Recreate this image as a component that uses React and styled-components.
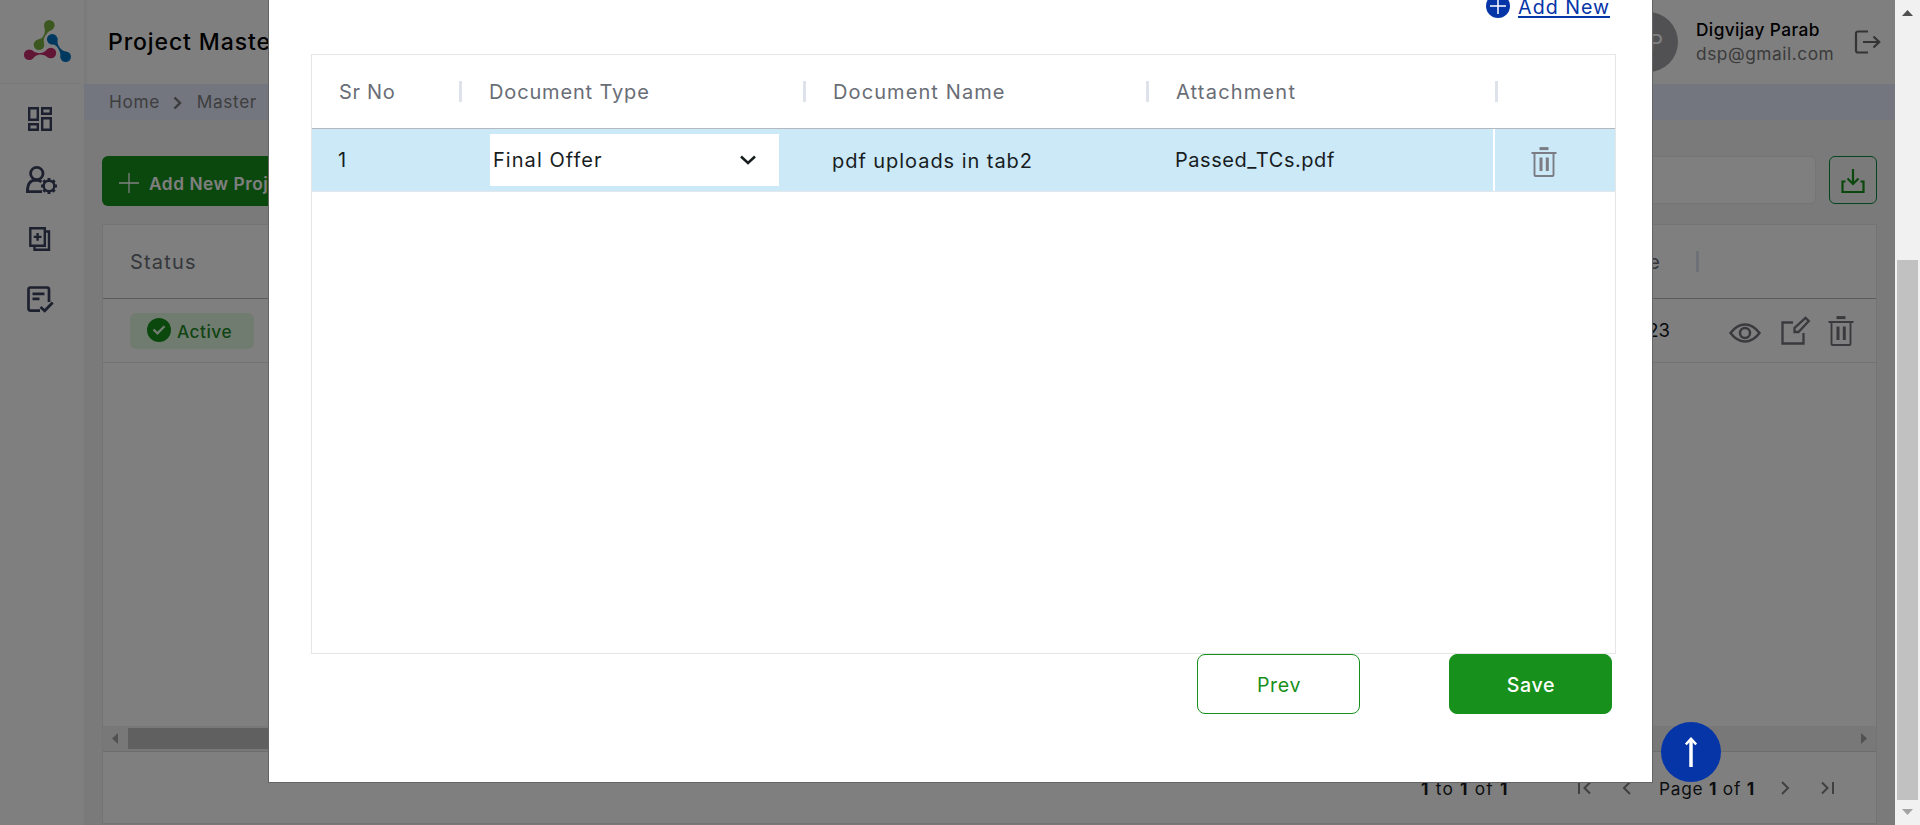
import React from 'react';
import styled, { createGlobalStyle } from 'styled-components';

const GlobalStyle = createGlobalStyle`
  * { box-sizing: border-box; }
  body { margin: 0; overflow: hidden; font-family: Inter, "Noto Sans", sans-serif; }
  svg { display: block; flex: none; }
`;

const Screen = styled.div`
  display: flex;
  width: 1920px;
  height: 825px;
  overflow: hidden;
`;

const Viewport = styled.div`
  position: relative;
  display: flex;
  width: 1895px;
  height: 825px;
  overflow: hidden;
  background: #f4f4f4;
`;

const Sidebar = styled.aside`
  width: 84px;
  flex: none;
  background: #fff;
`;

const LogoArea = styled.div`
  width: 80px;
  height: 84px;
  padding: 18px 0 0 23px;
  border-bottom: 1px solid #eee;
`;

const Nav = styled.nav`
  display: flex;
  flex-direction: column;
  gap: 28px;
  padding: 19px 0 0 24px;
`;

const Main = styled.div`
  flex: 1;
  min-width: 0;
`;

const Header = styled.header`
  display: flex;
  justify-content: space-between;
  align-items: center;
  height: 84px;
  padding: 0 14px 0 24px;
  background: linear-gradient(to right, #f4f4f4, #fff 6px);
`;

const Title = styled.div`
  padding-bottom: 1px;
  font-size: 23px;
  font-weight: 450;
  letter-spacing: 0.9px;
  color: #000;
`;

const Account = styled.div`
  display: flex;
  align-items: center;
`;

const Avatar = styled.div`
  display: flex;
  align-items: center;
  justify-content: center;
  width: 60px;
  height: 60px;
  border-radius: 50%;
  background: #a3a3a6;
  color: #fff;
  font-size: 22px;
  letter-spacing: 1px;
`;

const Identity = styled.div`
  width: 158px;
  margin-left: 18px;
  line-height: 24px;
  font-size: 17.3px;
  white-space: nowrap;
`;

const UserName = styled.div`
  font-weight: 450;
  letter-spacing: 0.4px;
  color: #000;
`;

const Email = styled.div`
  letter-spacing: 0.55px;
  color: #777;
`;

const Breadcrumb = styled.div`
  display: flex;
  align-items: center;
  height: 36px;
  padding: 0 0 1px 25px;
  background: #e6ebff;
  color: #7d7d7d;
  font-size: 17.3px;
  letter-spacing: 0.6px;
`;

const CrumbArrow = styled.svg`
  margin: 3px 15px 0 13px;
`;

const Toolbar = styled.div`
  display: flex;
  justify-content: space-between;
  height: 104px;
  padding: 36px 18px 0 18px;
`;

const AddProject = styled.button`
  display: flex;
  align-items: center;
  gap: 10px;
  width: 220px;
  height: 50px;
  padding: 4px 0 0 17px;
  border: 0;
  border-radius: 6px;
  background: #17911c;
  color: #fff;
  font: 600 17.3px Inter, sans-serif;
  letter-spacing: 0.55px;
  white-space: nowrap;
`;

const ToolbarRight = styled.div`
  display: flex;
  gap: 13px;
`;

const SearchBox = styled.div`
  width: 320px;
  height: 48px;
  border: 1px solid #eaeaea;
  border-radius: 6px;
  background: #fff;
`;

const ExportButton = styled.div`
  display: flex;
  align-items: center;
  justify-content: center;
  width: 48px;
  height: 48px;
  padding-top: 1px;
  border: 1px solid #0b8a3c;
  border-radius: 6px;
`;

const ProjectGrid = styled.section`
  width: 1775px;
  height: 600px;
  margin-left: 18px;
  border: 1px solid #e9e9e9;
  background: #fff;
`;

const GridHeader = styled.div`
  display: flex;
  justify-content: space-between;
  align-items: center;
  height: 74px;
  padding: 0 177px 0 27px;
  border-bottom: 1px solid #b7b9be;
  color: #6b6f78;
  font-size: 20px;
  font-weight: 370;
`;

const StatusHeading = styled.span`
  letter-spacing: 1.2px;
`;

const DateHeading = styled.span`
  display: flex;
  align-items: center;
  gap: 35px;
  letter-spacing: 1px;
`;

const GridRow = styled.div`
  display: flex;
  justify-content: space-between;
  align-items: center;
  height: 64px;
  padding: 0 22px 0 27px;
  border-bottom: 1px solid #e4e4e4;
`;

const StatusChip = styled.div`
  display: flex;
  align-items: center;
  gap: 6px;
  width: 124px;
  height: 36px;
  padding: 0 0 1px 17px;
  border-radius: 6px;
  background: #e3f8e3;
  color: #238a28;
  font-size: 17.3px;
  font-weight: 500;
  letter-spacing: 0.5px;
`;

const ChipLabel = styled.span`
  padding-top: 2px;
`;

const RowActions = styled.div`
  display: flex;
  align-items: center;
  padding-top: 1px;
  color: #74757c;
`;

const DateValue = styled.span`
  margin-right: 59px;
  padding-bottom: 2px;
  color: #0d0f14;
  font-size: 18.5px;
`;

const ActionIcon = styled.svg`
  margin-right: ${(p) => p.$after || 0}px;
`;

const GridSpace = styled.div`
  height: 363px;
`;

const HorizontalScroll = styled.div`
  display: flex;
  align-items: center;
  justify-content: space-between;
  height: 26px;
  padding: 0 9px 1px;
  border-bottom: 1px solid #dadada;
  background: #f0f0f0;
`;

const HorizontalTrack = styled.div`
  display: flex;
  flex: 1;
  padding: 0 10px;
`;

const HorizontalThumb = styled.div`
  width: 1180px;
  height: 21px;
  background: #c1c1c1;
`;

const Pagination = styled.div`
  display: flex;
  align-items: center;
  justify-content: flex-end;
  height: 71px;
  padding: 1px 42px 0 0;
  color: #181d1f;
  font-size: 17.3px;
  white-space: nowrap;

  svg { color: #808080; }
`;

const RangeText = styled.span`
  width: 157px;
  letter-spacing: 1.2px;
`;

const PageText = styled.span`
  width: 97px;
  margin: 0 25px 0 28px;
  letter-spacing: 0.75px;
`;

const PageGap = styled.span`
  width: 31px;
`;

const Backdrop = styled.div`
  position: absolute;
  inset: 0;
  background: rgba(0, 0, 0, 0.5);
`;

const Modal = styled.div`
  position: absolute;
  top: 0;
  left: 268px;
  width: 1385px;
  height: 783px;
  padding: 0 36px 0 42px;
  border: 1px solid #646464;
  border-top: 0;
  background: #fff;
`;

const ModalTools = styled.div`
  display: flex;
  justify-content: flex-end;
  gap: 8px;
  height: 54px;
  padding-right: 6px;
`;

const AddIcon = styled.svg`
  margin-top: -6px;
`;

const AddNew = styled.a`
  height: 18px;
  border-bottom: 2px solid #0635a8;
  color: #0635a8;
  font-size: 19.6px;
  font-weight: 370;
  line-height: 14px;
  letter-spacing: 1px;
`;

const DocTable = styled.div`
  width: 1305px;
  height: 600px;
  border: 1px solid #e6e6e8;
`;

const DocHeader = styled.div`
  display: grid;
  grid-template-columns: 150px 344px 343px 349px 117px;
  height: 74px;
  border-bottom: 1px solid #b4b8bf;
  color: #696d76;
`;

const DocRow = styled(DocHeader)`
  height: 63px;
  border-bottom: 1px solid #e2e9ec;
  background: #cce9f7;
  color: #181d1f;
`;

const HeadCell = styled.div`
  display: flex;
  align-items: center;
  justify-content: space-between;
  padding-left: 27px;
  font-size: 20px;
  font-weight: 370;
  letter-spacing: ${(p) => p.$track}px;
`;

const HeadDividerCell = styled.div`
  display: flex;
  align-items: center;
  margin-left: -3px;
`;

const Cell = styled.div`
  display: flex;
  align-items: center;
  padding: ${(p) => p.$drop || 0}px 0 0 26px;
  font-size: 20px;
  font-weight: 370;
  letter-spacing: ${(p) => p.$track || 0}px;
`;

const AttachmentCell = styled(Cell)`
  width: 346px;
  border-right: 2px solid #fff;
`;

const DeleteCell = styled.div`
  display: flex;
  align-items: center;
  justify-content: center;
  padding: 3px 25px 0 0;
  color: #7b7c84;
`;

const Divider = styled.i`
  width: 3px;
  height: 21px;
  background: #dde2eb;
`;

const Select = styled.div`
  display: flex;
  align-items: center;
  justify-content: space-between;
  width: 289px;
  height: 52px;
  margin-left: 2px;
  padding: 0 23px 0 3px;
  background: #fff;
`;

const Footer = styled.div`
  display: flex;
  justify-content: flex-end;
  gap: 89px;
  padding-right: 4px;
`;

const FormButton = styled.button`
  width: 163px;
  height: 60px;
  padding: 2px 0 0 1px;
  border: 1px solid #17911c;
  border-radius: 8px;
  background: ${(p) => (p.$solid ? '#17911c' : '#fff')};
  color: ${(p) => (p.$solid ? '#fff' : '#17911c')};
  font: ${(p) => (p.$solid ? 500 : 400)} 19.6px Inter, sans-serif;
  letter-spacing: 0.6px;
`;

const ToTop = styled.div`
  position: absolute;
  left: 1661px;
  top: 722px;
  display: flex;
  align-items: center;
  justify-content: center;
  width: 60px;
  height: 60px;
  border-radius: 50%;
  background: #0635a8;
`;

const PageScroll = styled.div`
  display: flex;
  flex-direction: column;
  align-items: center;
  width: 25px;
  height: 825px;
  padding: 10px 0 10px;
  background: #f1f1f1;
`;

const PageThumb = styled.div`
  width: 21px;
  height: 540px;
  margin: 244px 0 9px;
  background: #c1c1c1;
`;

const Logo = () => (
  <svg width="50" height="46" viewBox="23 18 50 46">
    <g fill="#78b040">
      <circle cx="49.3" cy="25.2" r="5.3" />
      <circle cx="39" cy="44.7" r="5.3" />
      <path d="M44.4 27Q46 33 42 38Q39 39.500 36 40.300L43.600 47Q43.500 41 44 38.500Q46.500 32 52 29.500Z" />
    </g>
    <g fill="#0073c0">
      <circle cx="52.2" cy="39.2" r="5.3" />
      <circle cx="65.7" cy="56.8" r="5.3" />
      <path d="M50 44Q55.500 43.500 58.500 49Q60.500 52 60.600 58L68.500 52.300Q62.500 51.500 60 48Q57 44.500 57.400 38Z" />
    </g>
    <g fill="#c52c6c">
      <circle cx="29.2" cy="54.7" r="5.3" />
      <circle cx="50.9" cy="53" r="5.3" />
      <path d="M31 49.700Q35.500 53.500 40 53.100Q44.500 53 48.500 48.300V57.700Q44.500 54.300 40 54.400Q35.500 54.600 31.500 59.500Z" />
    </g>
  </svg>
);

const NavIcon = ({ children }) => (
  <svg width="34" height="32" viewBox="0 0 34 32" fill="none" stroke="#3a425e" strokeWidth="2.4">
    {children}
  </svg>
);

const Trash = ({ after }) => (
  <ActionIcon $after={after} width="26" height="30" viewBox="0 0 26 30" fill="none" stroke="currentColor">
    <path d="M8.5 1.6h9" strokeWidth="3" />
    <path d="M.5 6h25M3.5 6v22a1 1 0 0 0 1 1h17a1 1 0 0 0 1-1V6" strokeWidth="1.9" />
    <path d="M10 10.5v13.5M16.3 10.5v13.5" strokeWidth="3" />
  </ActionIcon>
);

const Sign = ({ d, width, height, stroke = 2 }) => (
  <svg width={width} height={height} viewBox={`0 0 ${width} ${height}`} fill="none" stroke="currentColor" strokeWidth={stroke}>
    <path d={d} />
  </svg>
);

const gearTeeth = [0, 45, 90, 135, 180, 225, 270, 315];

export default function App() {
  return (
    <Screen>
      <GlobalStyle />
      <Viewport>
        <Sidebar>
          <LogoArea><Logo /></LogoArea>
          <Nav>
            <NavIcon>
              <path d="M5.2 5.2h8.6v11.6H5.2zM18.2 5.2h8.6v5.6h-8.6zM5.2 21.2h8.6v5.6H5.2zM18.2 15.2h8.6v11.6h-8.6z" />
            </NavIcon>
            <NavIcon>
              <circle cx="12.8" cy="10.5" r="6.2" strokeWidth="2.8" />
              <path d="M18 28.700H3.400C3.400 22 6 17.500 11 17.200q4 0 6.500 1.500" strokeWidth="2.8" />
              <circle cx="25" cy="23" r="5.300" />
              {gearTeeth.map((angle) => (
                <path key={angle} d="M25 17.500V15" strokeWidth="3" transform={`rotate(${angle} 25 23)`} />
              ))}
            </NavIcon>
            <NavIcon>
              <path d="M6.300 5.300h14.500v17.500H6.300zM21 8.500h4v18.200H10.500V23M13.600 10v7.800M9.700 13.900h7.800" />
            </NavIcon>
            <NavIcon>
              <path d="M16 27.600H6.500a2 2 0 0 1-2-2V6.500a2 2 0 0 1 2-2h16.500a2 2 0 0 1 2 2V19M8.500 10.800h12M8.500 15.800h7M16.500 24l4.200 3.800 8-8.300" strokeWidth="2.700" />
            </NavIcon>
          </Nav>
        </Sidebar>

        <Main>
          <Header>
            <Title>Project Master</Title>
            <Account>
              <Avatar>DP</Avatar>
              <Identity>
                <UserName>Digvijay Parab</UserName>
                <Email>dsp@gmail.com</Email>
              </Identity>
              <svg width="27" height="24" viewBox="0 0 27 24" fill="none" stroke="#686868" strokeWidth="2.2">
                <path d="M14 1.500H4a2 2 0 0 0-2 2v17a2 2 0 0 0 2 2h10M9 12h16M19.500 6.500 25.200 12l-5.700 5.500" />
              </svg>
            </Account>
          </Header>
          <Breadcrumb>
            <span>Home</span>
            <CrumbArrow width="9" height="14" viewBox="0 0 9 14" fill="none" stroke="#777" strokeWidth="2.4">
              <path d="m1.500 1.500 5.500 5.500-5.500 5.500" />
            </CrumbArrow>
            <span>Master</span>
          </Breadcrumb>
          <Toolbar>
            <AddProject>
              <Sign width={20} height={20} stroke={1.3} d="M10 0v20M0 10h20" />
              Add New Project
            </AddProject>
            <ToolbarRight>
              <SearchBox />
              <ExportButton>
                <svg width="24" height="25" viewBox="0 0 24 25" fill="none" stroke="#17911c" strokeWidth="2.2">
                  <path d="M12 1v15M6.500 10.500 12 16l5.500-5.500M4.500 13.500h-3V24h21V13.500h-3" />
                </svg>
              </ExportButton>
            </ToolbarRight>
          </Toolbar>

          <ProjectGrid>
            <GridHeader>
              <StatusHeading>Status</StatusHeading>
              <DateHeading>Date<Divider /></DateHeading>
            </GridHeader>
            <GridRow>
              <StatusChip>
                <svg width="24" height="24" viewBox="0 0 24 24" fill="none">
                  <circle cx="12" cy="12" r="12" fill="#17911c" />
                  <path d="m6.500 11.500 4 3.800 7-7" stroke="#e3f8e3" strokeWidth="2.300" />
                </svg>
                <ChipLabel>Active</ChipLabel>
              </StatusChip>
              <RowActions>
                <DateValue>2023</DateValue>
                <ActionIcon $after={20} width="32" height="32" viewBox="0 0 32 32" fill="none" stroke="currentColor" strokeWidth="2.500">
                  <path d="M1.500 18Q8 9.500 16 9.500T30.500 18Q24 26.500 16 26.500T1.500 18Z" />
                  <circle cx="16" cy="18" r="5" />
                </ActionIcon>
                <ActionIcon $after={17} width="30" height="30" viewBox="0 0 30 30" fill="none" stroke="currentColor" strokeWidth="2.300">
                  <path d="M12 6.500H1.500v21h21V17M13.500 16v-4L24.500 1.800l3.300 3.300L17.500 16z" />
                </ActionIcon>
                <Trash />
              </RowActions>
            </GridRow>
            <GridSpace />
            <HorizontalScroll>
              <svg width="6" height="11" viewBox="0 0 6 11"><path d="M6 0v11L0 5.500z" fill="#a3a3a3" /></svg>
              <HorizontalTrack><HorizontalThumb /></HorizontalTrack>
              <svg width="6" height="11" viewBox="0 0 6 11"><path d="M0 0v11l6-5.500z" fill="#a3a3a3" /></svg>
            </HorizontalScroll>
            <Pagination>
              <RangeText><b>1</b> to <b>1</b> of <b>1</b></RangeText>
              <Sign width={13} height={14} d="M1 1v12M12 1.500 6.500 7l5.500 5.500" />
              <PageGap />
              <Sign width={9} height={14} d="M8 1 2 7l6 6" />
              <PageText>Page <b>1</b> of <b>1</b></PageText>
              <Sign width={9} height={14} d="m1 1 6 6-6 6" />
              <PageGap />
              <Sign width={13} height={14} d="M12 1v12M1 1.500 6.500 7 1 12.500" />
            </Pagination>
          </ProjectGrid>
        </Main>

        <Backdrop />

        <Modal>
          <ModalTools>
            <AddIcon width="24" height="24" viewBox="0 0 24 24">
              <circle cx="12" cy="12" r="12" fill="#0635a8" />
              <path d="M12 4v16M4 12h16" stroke="#fff" strokeWidth="1.500" />
            </AddIcon>
            <AddNew>Add New</AddNew>
          </ModalTools>
          <DocTable>
            <DocHeader>
              <HeadCell $track={0.7}>Sr No<Divider /></HeadCell>
              <HeadCell $track={0.85}>Document Type<Divider /></HeadCell>
              <HeadCell $track={1.1}>Document Name<Divider /></HeadCell>
              <HeadCell $track={1.2}>Attachment</HeadCell>
              <HeadDividerCell><Divider /></HeadDividerCell>
            </DocHeader>
            <DocRow>
              <Cell>1</Cell>
              <Cell $track={1.05}>
                <Select>
                  Final Offer
                  <Sign width={16} height={10} stroke={2.500} d="m1 1.500 7 6.500 7-6.500" />
                </Select>
              </Cell>
              <Cell $track={0.95} $drop={2}>pdf uploads in tab2</Cell>
              <AttachmentCell $track={0.55}>Passed_TCs.pdf</AttachmentCell>
              <DeleteCell><Trash /></DeleteCell>
            </DocRow>
          </DocTable>
          <Footer>
            <FormButton>Prev</FormButton>
            <FormButton $solid>Save</FormButton>
          </Footer>
        </Modal>

        <ToTop>
          <svg width="12" height="30" viewBox="0 0 12 30" fill="none" stroke="#fff">
            <path d="M6 30V2" strokeWidth="3.500" />
            <path d="M.800 7.500 6 1.800l5.200 5.700" strokeWidth="2.500" />
          </svg>
        </ToTop>
      </Viewport>

      <PageScroll>
        <svg width="11" height="6" viewBox="0 0 11 6"><path d="M0 6h11L5.500 0z" fill="#505050" /></svg>
        <PageThumb />
        <svg width="11" height="6" viewBox="0 0 11 6"><path d="M0 0h11L5.500 6z" fill="#a3a3a3" /></svg>
      </PageScroll>
    </Screen>
  );
}
